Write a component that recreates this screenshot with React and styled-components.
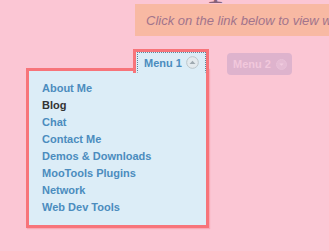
import React from 'react'
import styled, { createGlobalStyle } from 'styled-components'

const colors = {
  page: '#fbc6d4',
  banner: '#f8b9a3',
  bannerText: '#a2748c',
  red: '#f7747a',
  panel: '#dcedf7',
  link: '#4b8cbe',
  active: '#333333',
}

const GlobalStyle = createGlobalStyle`
  html, body {
    margin: 0;
    padding: 0;
    background: ${colors.page};
    font-family: "Liberation Sans", Arial, sans-serif;
  }
`

const Page = styled.div`
  width: 329px;
  height: 251px;
  overflow: hidden;
  background: ${colors.page};
`

const HeadingClip = styled.div`
  height: 4px;
  overflow: hidden;
  padding-left: 206px;
`

const Title = styled.h1`
  margin: -27px 0 0;
  font-family: "Liberation Serif", "Times New Roman", serif;
  font-weight: normal;
  font-size: 36px;
  line-height: 36px;
  color: #86627a;
`

const Banner = styled.div`
  margin-left: 135px;
  height: 32px;
  padding-left: 11px;
  background: ${colors.banner};
  color: ${colors.bannerText};
  font-style: italic;
  font-size: 13px;
  line-height: 33px;
  white-space: nowrap;
  overflow: hidden;
`

const MenuBar = styled.div`
  display: flex;
  align-items: flex-start;
  margin-top: 13px;
  padding-left: 133px;
`

const MenuItem = styled.div`
  position: relative;
`

const Tab = styled.div`
  position: relative;
  z-index: 2;
  box-sizing: border-box;
  width: 76px;
  height: 24px;
  border: 3px solid ${colors.red};
  border-bottom: none;
  background: ${colors.panel};
`

const TabLink = styled.a`
  display: flex;
  align-items: center;
  gap: 4px;
  box-sizing: border-box;
  height: 21px;
  margin-left: 1px;
  padding-left: 6px;
  border: 1px dotted #5f8599;
  border-bottom-color: transparent;
  color: ${colors.link};
  font-weight: bold;
  font-size: 11px;
  text-decoration: none;
`

const Dropdown = styled.ul`
  position: absolute;
  z-index: 1;
  top: 19px;
  left: -107px;
  box-sizing: border-box;
  width: 183px;
  height: 160px;
  margin: 0;
  padding: 9px 0 0 13px;
  list-style: none;
  border: 3px solid ${colors.red};
  background: ${colors.panel};
  box-shadow: 1px 1px 1px rgba(247, 116, 122, 0.35);
`

const DropLink = styled.li`
  font-weight: bold;
  font-size: 11px;
  line-height: 17px;
  color: ${(p) => (p.$active ? colors.active : colors.link)};
  white-space: nowrap;
`

const Menu2 = styled.a`
  display: flex;
  align-items: center;
  gap: 5px;
  box-sizing: border-box;
  width: 65px;
  height: 22px;
  margin: 4px 0 0 18px;
  padding-left: 6px;
  border-radius: 4px;
  background: #deb3cd;
  color: #f2c8dc;
  font-weight: bold;
  font-size: 11px;
  text-decoration: none;
`

const Arrow = ({ up, size = 12, fill, stroke, tri }) => (
  <svg width={size} height={size} viewBox="0 0 12 12">
    <circle cx="6" cy="6" r="5.4" fill={fill} stroke={stroke} strokeWidth="0.9" />
    {up ? (
      <path d="M3.3 7.4 L6 4.4 L8.7 7.4 Z" fill={tri} />
    ) : (
      <path d="M3.6 4.8 L6 7.4 L8.4 4.8 Z" fill={tri} />
    )}
  </svg>
)

const items = [
  'About Me',
  'Blog',
  'Chat',
  'Contact Me',
  'Demos & Downloads',
  'MooTools Plugins',
  'Network',
  'Web Dev Tools',
]

const App = () => (
  <Page>
    <GlobalStyle />
    <HeadingClip>
      <Title>1</Title>
    </HeadingClip>
    <Banner>Click on the link below to view what happens</Banner>
    <MenuBar>
      <MenuItem>
        <Tab>
          <TabLink href="#">
            Menu 1
            <Arrow up size={13} fill="#e3eaee" stroke="#b9c4ca" tri="#9ea9b0" />
          </TabLink>
        </Tab>
        <Dropdown>
          {items.map((item) => (
            <DropLink key={item} $active={item === 'Blog'}>
              {item}
            </DropLink>
          ))}
        </Dropdown>
      </MenuItem>
      <Menu2 href="#">
        Menu 2
        <Arrow size={11} fill="#e5bcd4" stroke="#e9c3d9" tri="#f2cde0" />
      </Menu2>
    </MenuBar>
  </Page>
)

export default App
